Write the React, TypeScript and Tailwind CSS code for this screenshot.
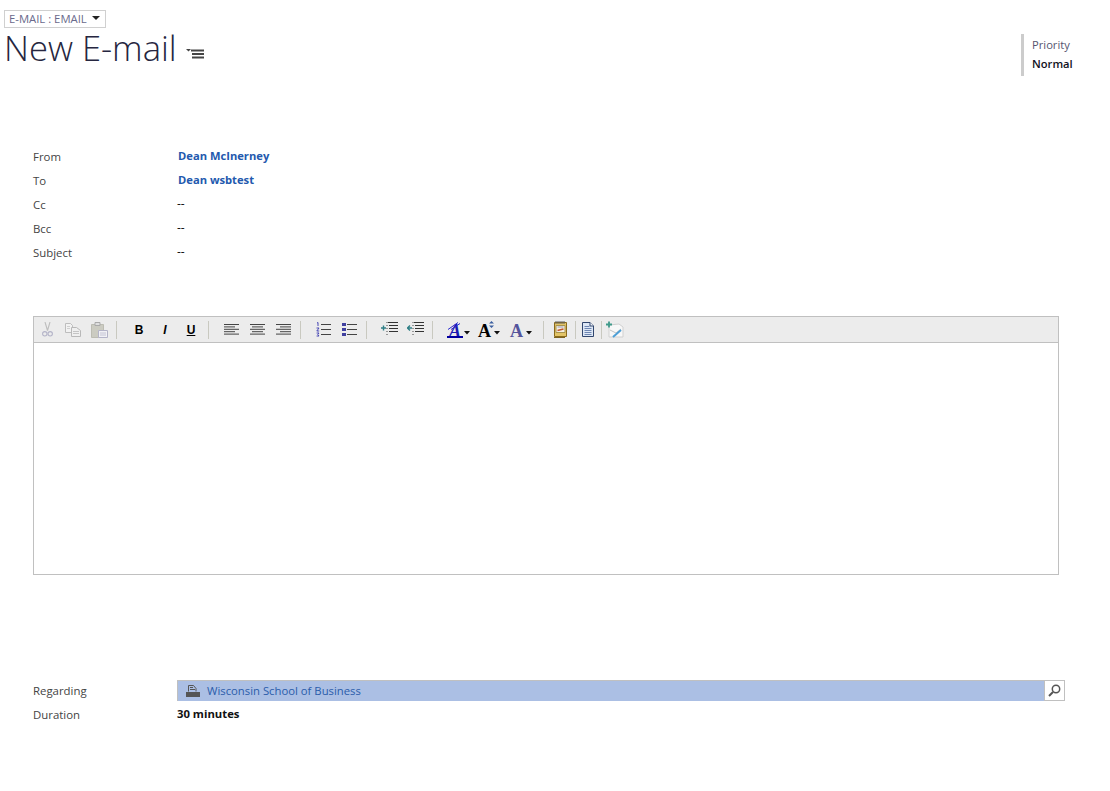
import React from 'react';

const Sep: React.FC<{ className: string }> = ({ className }) => (
  <span className={`w-px h-[18px] bg-[#c9c9c0] shrink-0 ${className}`} />
);

const Slot: React.FC<{ className?: string; children: React.ReactNode }> = ({ className = 'w-[26px]', children }) => (
  <span className={`flex items-center justify-center h-[26px] shrink-0 ${className}`}>{children}</span>
);

const Caret: React.FC = () => (
  <svg width="6" height="4" viewBox="0 0 6 4" className="absolute right-0 bottom-[4px]">
    <path d="M0 0h6L3 3.500z" fill="#111" />
  </svg>
);

const CutIcon: React.FC = () => (
  <svg width="11" height="15" viewBox="0 0 11 15" fill="none" stroke="#b4b4c8" strokeWidth="1.100">
    <path d="M3 0l2.500 8.500M8 0L5.500 8.500" stroke="#bdbdbd" />
    <circle cx="2.800" cy="11.800" r="2.200" />
    <circle cx="8.200" cy="11.800" r="2.200" />
  </svg>
);

const CopyIcon: React.FC = () => (
  <svg width="16" height="14" viewBox="0 0 16 14">
    <path d="M.5.500h5l2 2v7h-7z" fill="#f2f2f2" stroke="#bdbdbd" />
    <path d="M2 3.500h3M2 5.500h3" stroke="#cfcfcf" />
    <path d="M6.500 4.500h5l4 3v6h-9z" fill="#efefef" stroke="#b8b8b8" />
    <path d="M8 8.500h6M8 10.500h6" stroke="#c4c4c4" />
  </svg>
);

const PasteIcon: React.FC = () => (
  <svg width="17" height="16" viewBox="0 0 17 16">
    <path d="M.5 2.500h12v13H.5z" fill="#cbcbc1" stroke="#bcbcb2" />
    <path d="M4 .5h5v3H4z" fill="#dedede" stroke="#a9a9a9" />
    <path d="M7.500 8.500h9v7h-9z" fill="#f1f1f5" stroke="#b4b4c8" />
    <path d="M9 11h6M9 13h6" stroke="#c4c4d4" />
  </svg>
);

const Lines: React.FC<{ rows: [number, number][] }> = ({ rows }) => (
  <svg width="15" height="12" viewBox="0 0 15 12" stroke="#444" strokeWidth="1">
    {rows.map(([x1, x2], i) => (
      <path key={i} d={`M${x1} ${i * 2.400 + 0.500}H${x2}`} />
    ))}
  </svg>
);

const OlIcon: React.FC = () => (
  <svg width="15" height="15" viewBox="0 0 15 15">
    <path d="M5 2.500h10M5 7.500h10M5 12.500h10" stroke="#444" />
    <path d="M1 1l1-.5v3.500M.5 6h2.500L.8 9h2.400M.6 11h2.400L1.800 12.500 3 14H.6" stroke="#3a3ab0" strokeWidth="0.900" fill="none" />
  </svg>
);

const UlIcon: React.FC = () => (
  <svg width="15" height="13" viewBox="0 0 15 13">
    <path d="M0 0h4v3H0zM0 5h4v3H0zM0 10h4v3H0z" fill="#3f3f9f" />
    <path d="M5 1.500h10M5 6.500h10M5 11.500h10" stroke="#444" />
  </svg>
);

const IndentIcon: React.FC<{ flip?: boolean }> = ({ flip }) => (
  <svg width="17" height="15" viewBox="0 0 17 15">
    <path d="M7 .5h10M8 3.500h9M8 6.500h9M8 9.500h9" stroke="#333" />
    <path d="M6 0v15" stroke="#444" strokeDasharray="1 2" />
    {flip ? (
      <path d="M0 6h5M2.500 3.500v5" stroke="#2f7f86" strokeWidth="1.400" />
    ) : (
      <path d="M0 6h5M3 3.500L.5 6 3 8.500" stroke="#2f7f86" strokeWidth="1.400" fill="none" />
    )}
  </svg>
);

const NoteIcon: React.FC = () => (
  <svg width="13" height="17" viewBox="0 0 13 17">
    <path d="M.5 1.500h12v14H.5z" fill="#e3c466" stroke="#8a6a1c" />
    <path d="M2 0v3M4 0v3M6 0v3M8 0v3M10 0v3" stroke="#5f5f5f" />
    <path d="M2 4.500h9v7H2z" fill="#f5f1e2" stroke="#a8934f" />
    <path d="M3.500 6h6" stroke="#9a9ab8" />
    <path d="M3.500 9.500l6-1.500" stroke="#c2552b" strokeWidth="1.500" />
    <path d="M0 16.500h11" stroke="#7d6320" />
  </svg>
);

const DocIcon: React.FC = () => (
  <svg width="12" height="15" viewBox="0 0 12 15">
    <path d="M.5.500h7.500l3.500 3.500v10.500H.5z" fill="#dde7f5" stroke="#31466e" />
    <path d="M8 .5v3.500h3.500" fill="#f5f8fc" stroke="#31466e" />
    <path d="M2.500 4.500h5M2.500 6.500h7M2.500 8.500h7M2.500 10.500h7M2.500 12.500h7" stroke="#6e86b2" />
  </svg>
);

const ImageEditIcon: React.FC = () => (
  <svg width="18" height="18" viewBox="0 0 18 18">
    <path d="M3 4l10-1 4 3v10H3z" fill="#f8f8f8" stroke="#d0d0d0" />
    <path d="M4 9l6 3 5-4" fill="none" stroke="#c4c4c4" />
    <path d="M0 3.500h6M3 .5v6" stroke="#3f9a8a" strokeWidth="1.800" />
    <path d="M7 16l8-7" stroke="#4d9fd6" strokeWidth="2" />
  </svg>
);

const RegardingIcon: React.FC = () => (
  <svg width="14" height="12" viewBox="0 0 14 12">
    <path d="M2.500.5h5l2.500 3v3M2.500.5v6M4 2.500h3M4 4.500h5" fill="none" stroke="#555" />
    <path d="M0 7h14v5H0z" fill="#555" />
  </svg>
);

const Row: React.FC<{ label: string; value: string; link?: boolean }> = ({ label, value, link }) => (
  <div className="flex h-6 items-center">
    <div className="w-[144px] text-[11.4px] text-[#444444]">{label}</div>
    <div className={link ? 'text-[11.2px] font-bold text-[#2359ae] pb-[2px] pl-px' : 'text-[12px] font-medium text-[#111111] pb-[3px]'}>{value}</div>
  </div>
);

const App: React.FC = () => {
  return (
    <div className="relative w-[1110px] h-[791px] bg-white overflow-hidden font-['Open_Sans','Liberation_Sans',sans-serif]">
      <header className="flex justify-between pt-[10px] pl-1 pr-[26px] h-[145px]">
        <div>
          <div className="flex items-center w-[102px] h-[18px] border border-[#d0d0d0] pl-1 text-[11.3px] text-[#6a6a8c] whitespace-nowrap">
            E-MAIL : EMAIL
            <svg width="8" height="4" viewBox="0 0 8 4" className="ml-[5px] mb-[2px]">
              <path d="M0 0h8L4 4z" fill="#222" />
            </svg>
          </div>
          <div className="flex items-end h-[42px]">
            <h1 className="text-[34.600px] leading-[41px] mb-[2px] font-light text-[#262640] whitespace-nowrap">New E-mail</h1>
            <svg width="18" height="11" viewBox="0 0 18 11" className="ml-[9px] mb-[11px]">
              <path d="M0 1h5L2.500 3.500z" fill="#444" />
              <path d="M5 2.500h13M6 6h12M6 9.500h12" stroke="#444" strokeWidth="1.800" />
            </svg>
          </div>
        </div>
        <div className="mt-6 w-[52px] h-[41px] border-l-[3px] border-[#cccccc] pl-2 pt-px text-[11.2px] leading-[19px] box-content">
          <div className="text-[#555570]">Priority</div>
          <div className="font-semibold text-[#111122]">Normal</div>
        </div>
      </header>

      <section className="pl-[33px]">
        <div className="flex flex-col">
          <Row label="From" value="Dean McInerney" link />
          <Row label="To" value="Dean wsbtest" link />
          <Row label="Cc" value="--" />
          <Row label="Bcc" value="--" />
          <Row label="Subject" value="--" />
        </div>

        <div className="mt-[51px] w-[1026px] h-[259px] border border-[#c0c0c0]">
          <div className="flex items-center h-[26px] bg-[#ececec] border-b border-[#c0c0c0]">
            <Slot><CutIcon /></Slot>
            <Slot><CopyIcon /></Slot>
            <Slot><PasteIcon /></Slot>
            <Sep className="ml-1 mr-[9px]" />
            <Slot><span className="text-[12px] font-bold text-black font-['Liberation_Sans',sans-serif]">B</span></Slot>
            <Slot><span className="text-[12px] font-bold italic text-black font-['Liberation_Sans',sans-serif]">I</span></Slot>
            <Slot><span className="text-[12px] font-bold underline text-black font-['Liberation_Sans',sans-serif]">U</span></Slot>
            <Sep className="ml-1 mr-[9px]" />
            <Slot><Lines rows={[[0, 15], [0, 11], [0, 15], [0, 11], [0, 15]]} /></Slot>
            <Slot><Lines rows={[[0, 15], [2, 13], [0, 15], [2, 13], [0, 15]]} /></Slot>
            <Slot><Lines rows={[[0, 15], [4, 15], [0, 15], [4, 15], [0, 15]]} /></Slot>
            <Sep className="ml-1 mr-[9px]" />
            <Slot><OlIcon /></Slot>
            <Slot><UlIcon /></Slot>
            <Sep className="ml-1 mr-[9px]" />
            <Slot><IndentIcon flip /></Slot>
            <Slot><IndentIcon /></Slot>
            <Sep className="ml-1 mr-[9px]" />
            <Slot className="w-[32px] relative">
              <span className="relative w-[24px] h-[18px] block">
                <span className="absolute left-[3px] top-[-3px] text-[18px] font-bold italic text-[#1a1ab0] font-['Liberation_Serif',serif]">A</span>
                <svg width="14" height="8" viewBox="0 0 14 8" className="absolute left-[1px] top-[1px]">
                  <path d="M1 7.500L11 .5M4 7.500L13 1.500" stroke="#2a2ad0" strokeWidth="1" />
                </svg>
                <span className="absolute left-px bottom-[1px] w-[16px] h-[2px] bg-[#0000a0]" />
                <Caret />
              </span>
            </Slot>
            <Slot className="w-[30px] relative">
              <span className="relative w-[22px] h-[18px] block">
                <span className="absolute left-0 top-[-3px] text-[18px] font-bold text-black font-['Liberation_Serif',serif]">A</span>
                <svg width="5" height="7" viewBox="0 0 5 7" className="absolute left-[11px] top-0">
                  <path d="M2.500 0L5 2.500H0zM2.500 7L0 4.500h5z" fill="#3b5fa0" />
                </svg>
                <Caret />
              </span>
            </Slot>
            <Slot className="w-[30px] ml-[2px] relative">
              <span className="relative w-[22px] h-[18px] block">
                <span className="absolute left-0 top-[-3px] text-[18px] font-bold text-[#54549c] font-['Liberation_Serif',serif]">A</span>
                <Caret />
              </span>
            </Slot>
            <Sep className="ml-[7px] mr-1" />
            <Slot className="w-[24px]"><NoteIcon /></Slot>
            <Sep className="ml-[3px]" />
            <Slot className="w-[24px]"><DocIcon /></Slot>
            <Sep className="ml-px" />
            <Slot><ImageEditIcon /></Slot>
          </div>
        </div>

        <div className="mt-[105px] flex h-[21px] items-center">
          <div className="w-[144px] text-[11.4px] text-[#444444]">Regarding</div>
          <div className="flex w-[888px] h-[21px]">
            <div className="flex flex-1 items-center gap-[7px] bg-[#abbfe4] border-t border-l border-[#c0c0c0] pl-[8px] text-[11.3px] text-[#2a5caa]">
              <RegardingIcon />
              Wisconsin School of Business
            </div>
            <div className="flex w-[21px] items-center justify-center border border-[#c0c0c0] bg-white">
              <svg width="13" height="13" viewBox="0 0 13 13" fill="none" stroke="#555">
                <circle cx="8" cy="5" r="3.700" strokeWidth="1.500" />
                <path d="M5 8l-4 4" strokeWidth="2" />
              </svg>
            </div>
          </div>
        </div>
        <div className="mt-[2px] flex h-6 items-center">
          <div className="w-[144px] text-[11.4px] text-[#444444]">Duration</div>
          <div className="text-[11.3px] font-bold text-[#111111] pb-[2px]">30 minutes</div>
        </div>
      </section>
    </div>
  );
};

export default App;
